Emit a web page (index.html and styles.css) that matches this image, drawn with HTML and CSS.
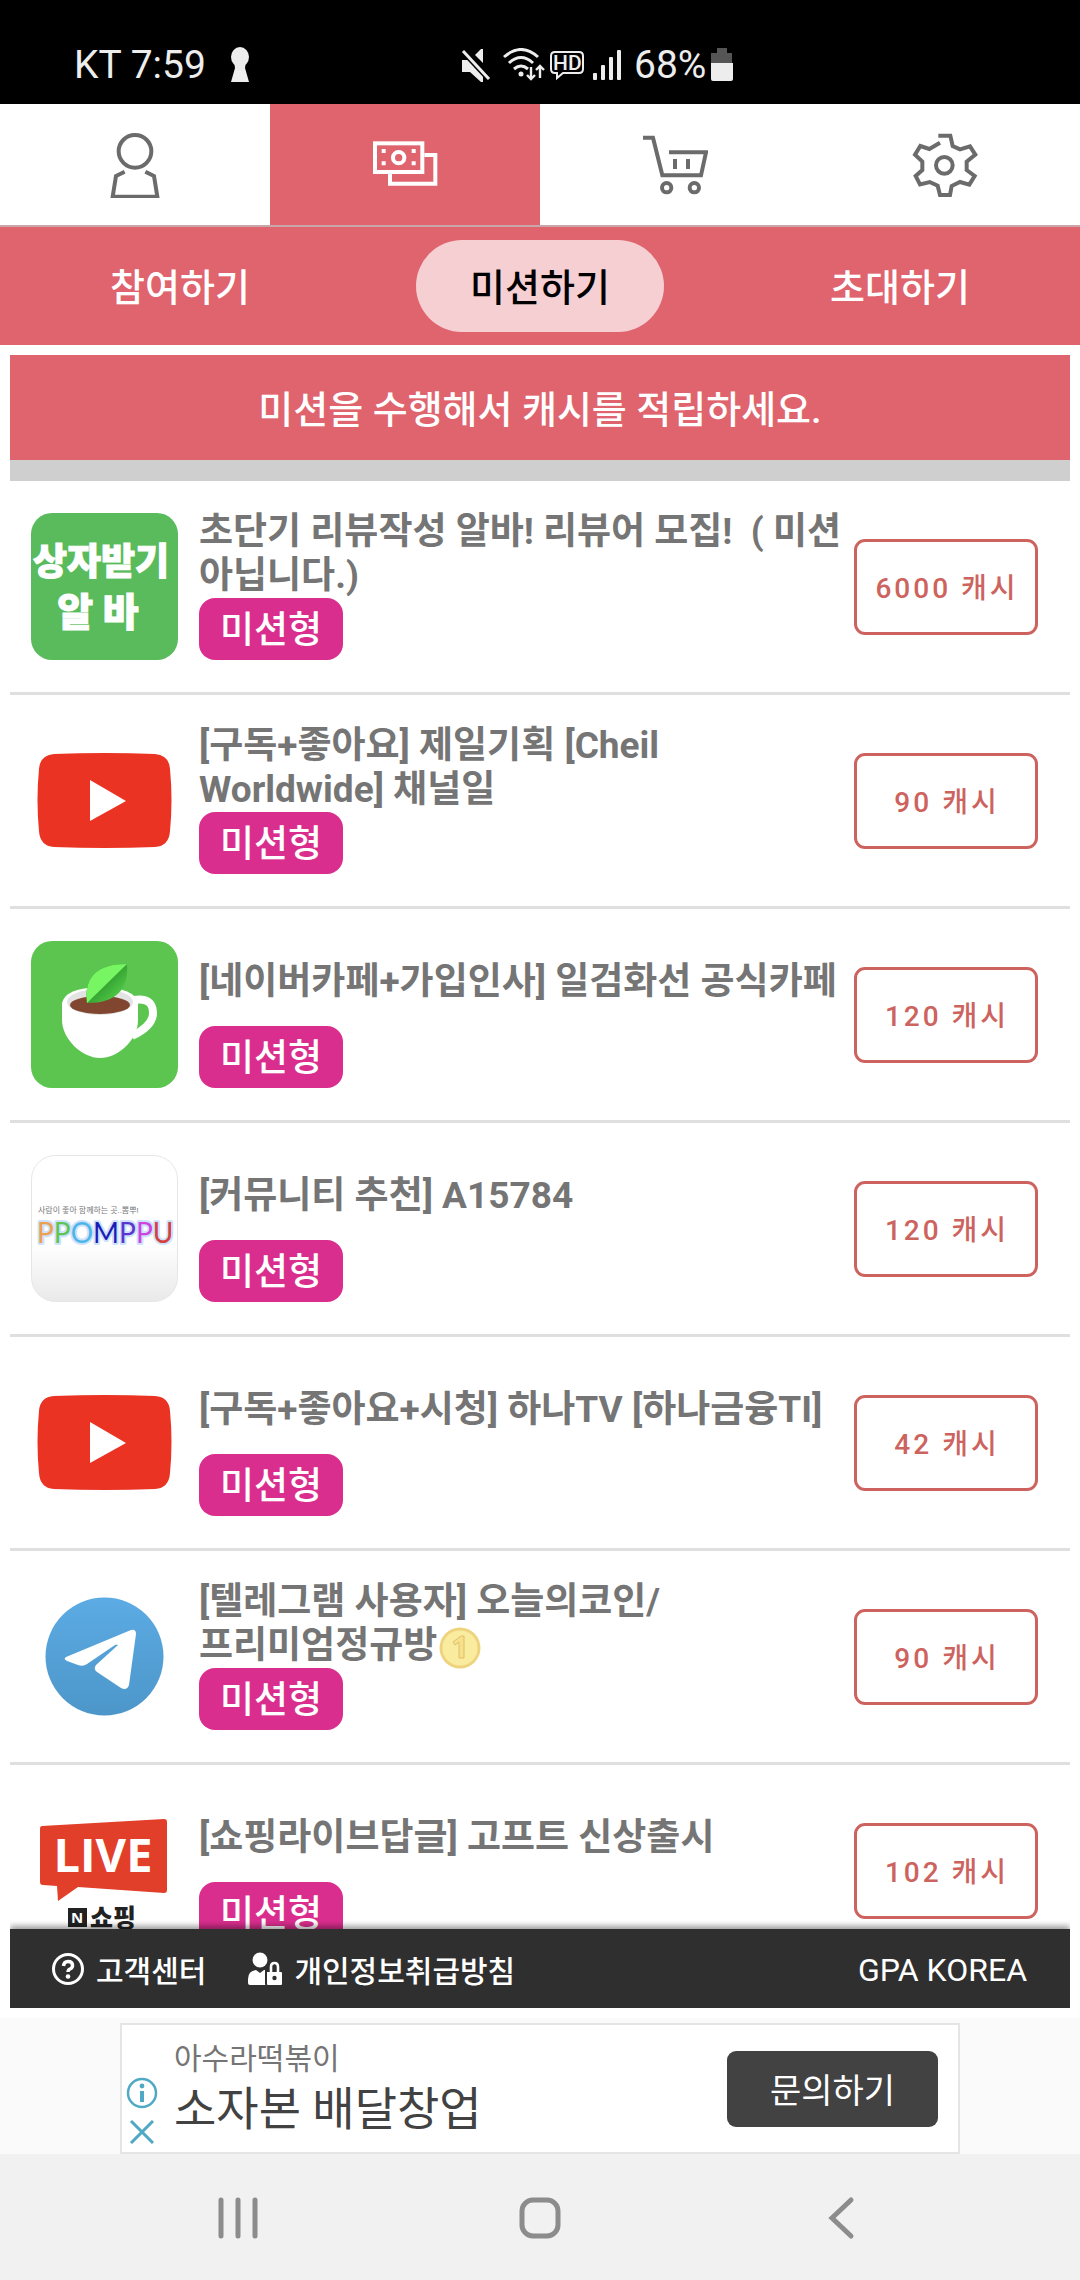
FILE: index.html
```html
<!DOCTYPE html>
<html lang="ko">
<head>
<meta charset="utf-8">
<meta name="viewport" content="width=device-width, initial-scale=1">
<title>미션하기</title>
<link rel="stylesheet" href="styles.css">
</head>
<body>
<div class="status">
  <div class="status-left">
    <span>KT 7:59</span>
    <svg width="20" height="36" viewBox="0 0 20 36" fill="#ededed"><ellipse cx="10" cy="10" rx="9" ry="10"/><path d="M4 14h12l-1 7 4 14H1l4-14z"/></svg>
  </div>
  <div class="status-right">
    <svg width="30" height="34" viewBox="0 0 30 34"><path d="M1 12h6L22 27v7h-2L9 24H1z" fill="#ededed"/><path d="M22 1v14l-8-8 6-6z" fill="#ededed"/><path d="M2 3l26 28" stroke="#000" stroke-width="6"/><path d="M2 3l26 28" stroke="#ededed" stroke-width="3"/></svg>
    <svg class="wifi" width="42" height="34" viewBox="0 0 42 34" fill="none" stroke="#ededed" stroke-width="3"><path d="M1 9q17-15 34 0M6 15q12-11 24 0M11 21q7-6 14 0"/><circle cx="18" cy="26" r="2.5" fill="#ededed" stroke="none"/><path d="M28 19v12M24 27l4 4 4-4M37 30V18M33 22l4-4 4 4" stroke-width="2.4"/></svg>
    <svg width="36" height="32" viewBox="0 0 36 32" fill="none" stroke="#ededed"><path d="M6 3h24q4 0 4 4v13q0 4-4 4H14l-6 5v-5H6q-4 0-4-4V7q0-4 4-4z" stroke-width="2"/><text x="4" y="21" font-size="21" class="hd">HD</text></svg>
    <svg class="signal" width="28" height="32" viewBox="0 0 28 32" fill="#ededed"><rect y="24" width="4" height="7" rx="1"/><rect x="8" y="16" width="4" height="15" rx="1"/><rect x="16" y="8" width="4" height="23" rx="1"/><rect x="24" y="1" width="4" height="30" rx="1"/></svg>
    <span>68%</span>
    <svg class="battery" width="22" height="34" viewBox="0 0 22 34"><path d="M6 0h10v5h5v12H0V5h6z" fill="#555"/><path d="M0 15h22v16q0 2-2 2H2q-2 0-2-2z" fill="#ededed"/></svg>
  </div>
</div>

<nav class="tabs" aria-label="주 메뉴">
  <a href="#me" aria-label="내 정보"><svg viewBox="36 36 198 198"><circle cx="135" cy="94" r="49"/><path d="M104 155l-26 13-10 62h134l-10-62-26-13"/></svg></a>
  <a href="#cash" class="on" aria-label="적립"><svg viewBox="36 36 198 198"><rect x="45" y="70" width="142" height="86"/><circle cx="116" cy="113" r="17"/><path d="M193 105h33v86H90v-32"/><path d="M65 93h12M155 93h12M65 130h12M155 130h12"/></svg></a>
  <a href="#shop" aria-label="상점"><svg viewBox="36 36 198 198"><path d="M39 53h30l28 113h116l15-69H117M135 117v30M174 117v30"/><circle cx="110" cy="203" r="14"/><circle cx="193" cy="203" r="14"/></svg></a>
  <a href="#settings" aria-label="설정"><svg viewBox="846 36 198 198"><path d="M925 47h36l7 31 22 10 30-9 16 25-26 21v25l24 18-16 26-28-8-25 12-5 27h-30l-7-28-24-11-29 7-13-25 20-18v-25l-22-21 16-26 27 9 32-19"/><circle cx="943" cy="136" r="25"/></svg></a>
</nav>

<nav class="subtabs" aria-label="적립 메뉴">
  <a href="#join">참여하기</a>
  <a href="#mission" class="on">미션하기</a>
  <a href="#invite">초대하기</a>
</nav>

<main class="content">
  <h1 class="banner">미션을 수행해서 캐시를 적립하세요.</h1>
  <ul class="missions">
    <li class="mission">
      <svg class="thumb" viewBox="0 0 147 147"><rect width="147" height="147" rx="21" fill="#5abb5c"/><g class="heavy"><text x="70" y="62" font-size="37">상자받기</text><text x="67" y="113" font-size="39">알 바</text></g></svg>
      <div class="info"><h2>초단기 리뷰작성 알바! 리뷰어 모집! &nbsp;( 미션 아닙니다.)</h2><span class="badge">미션형</span></div>
      <button class="price">6000 캐시</button>
    </li>
    <li class="mission">
      <svg class="thumb" viewBox="0 0 147 147"><path d="M23 27q51-2 101 0 14 1 15 15 3 31 0 62-1 15-15 16-50 2-101 0-14-1-15-16-3-31 0-62 1-14 15-15z" fill="#ea3323"/><path d="M59 53l36 21-36 20z" fill="#fff"/></svg>
      <div class="info"><h2>[구독+좋아요] 제일기획 [Cheil Worldwide] 채널일</h2><span class="badge">미션형</span></div>
      <button class="price">90 캐시</button>
    </li>
    <li class="mission">
      <svg class="thumb" viewBox="0 0 147 147">
        <defs><linearGradient id="leaf" x1="0" y1="0" x2="1" y2="1"><stop offset="0.4" stop-color="#2f9a2f"/><stop offset="1" stop-color="#5fe050"/></linearGradient></defs>
        <rect width="147" height="147" rx="21" fill="#5bc550"/>
        <path d="M103 59q19-3 19 13 0 13-21 23" fill="none" stroke="#fff" stroke-width="8"/>
        <path d="M31 62q3-15 38-16 35 1 38 16v17c0 20-20 38-38 38S31 98 31 79z" fill="#fff"/>
        <ellipse cx="69" cy="61" rx="33" ry="13" fill="#e3e3e3"/><ellipse cx="69" cy="64" rx="30" ry="9" fill="#81462f"/>
        <path d="M56 62Q51 23 96 23 99 62 56 62z" fill="url(#leaf)"/><path d="M56 62Q51 23 96 23z" fill="#78f562"/>
      </svg>
      <div class="info"><h2>[네이버카페+가입인사] 일검화선 공식카페</h2><span class="badge">미션형</span></div>
      <button class="price">120 캐시</button>
    </li>
    <li class="mission">
      <svg class="thumb" viewBox="0 0 147 147">
        <defs><linearGradient id="paper" x1="0" y1="0" x2="0" y2="1"><stop offset="0.6" stop-color="#fff"/><stop offset="1" stop-color="#e9e9e9"/></linearGradient></defs>
        <rect x="0.5" y="0.5" width="146" height="146" rx="24" fill="url(#paper)" stroke="#e6e6e6"/>
        <text x="7" y="58" font-size="8" class="tagline">사람이 좋아 함께하는 곳..뽐뿌!</text>
        <text x="6" y="88" font-size="28" class="ppomppu"><tspan fill="#eda04e">P</tspan><tspan fill="#5ec554">P</tspan><tspan fill="#4db6e8">O</tspan><tspan fill="#1c1cb8">M</tspan><tspan fill="#5b35cf">P</tspan><tspan fill="#cc44e0">P</tspan><tspan fill="#d34040">U</tspan></text>
      </svg>
      <div class="info"><h2>[커뮤니티 추천] A15784</h2><span class="badge">미션형</span></div>
      <button class="price">120 캐시</button>
    </li>
    <li class="mission">
      <svg class="thumb" viewBox="0 0 147 147"><path d="M23 27q51-2 101 0 14 1 15 15 3 31 0 62-1 15-15 16-50 2-101 0-14-1-15-16-3-31 0-62 1-14 15-15z" fill="#ea3323"/><path d="M59 53l36 21-36 20z" fill="#fff"/></svg>
      <div class="info"><h2>[구독+좋아요+시청] 하나TV [하나금융TI]</h2><span class="badge">미션형</span></div>
      <button class="price">42 캐시</button>
    </li>
    <li class="mission">
      <svg class="thumb" viewBox="0 0 147 147">
        <defs><linearGradient id="sky" x1="0" y1="0" x2="0" y2="1"><stop offset="0" stop-color="#5cabe4"/><stop offset="1" stop-color="#4c96c9"/></linearGradient></defs>
        <circle cx="73.500" cy="73.500" r="59" fill="url(#sky)"/>
        <path d="M35 74L100 47q5-1 5 4l-7 51q-2 6-8 3L66 89q-4-3-1-7l22-20q-1-1-3 0L56 81q-4 3-9 1l-11-4q-4-2-1-4z" fill="#fff"/>
      </svg>
      <div class="info"><h2>[텔레그램 사용자] 오늘의코인/<wbr>프리미엄정규방<svg class="coin" viewBox="0 0 42 42"><circle cx="21" cy="21" r="20.500" fill="#eed27c"/><circle cx="21" cy="21" r="18" fill="#f9ec9f" stroke="#f0d684"/><path d="M14 15l8-6h3v22h-5V15l-4 3z" fill="#f5e08c" stroke="#dfbf6a"/></svg></h2><span class="badge">미션형</span></div>
      <button class="price">90 캐시</button>
    </li>
    <li class="mission">
      <svg class="thumb" viewBox="0 0 147 147">
        <path d="M11 29l122-7q3 0 3 3v68q0 3-3 3l-86-6-20 14-1-15-14-1q-3 0-3-3V32q0-3 2-3z" fill="#e23f2a"/>
        <text x="72" y="75" font-size="47" class="live">LIVE</text>
        <rect x="37" y="111" width="19" height="19" fill="#222"/><text x="46" y="126" font-size="15" class="live">N</text>
        <text x="59" y="130" font-size="25" class="shopping">쇼핑</text>
      </svg>
      <div class="info"><h2>[쇼핑라이브답글] 고프트 신상출시</h2><span class="badge">미션형</span></div>
      <button class="price">102 캐시</button>
    </li>
  </ul>
  <footer class="footer">
    <a href="#help"><svg width="32" height="32" viewBox="0 0 32 32" fill="none" stroke="#fff"><circle cx="16" cy="16" r="14.500" stroke-width="3"/><path d="M11.500 13q.5-4.500 4.500-4.500 4.500 0 4.500 4 0 2.500-2.500 3.500-2 1-2 3" stroke-width="3.500"/><circle cx="16" cy="23.500" r="2.300" fill="#fff" stroke="none"/></svg>고객센터</a>
    <a href="#privacy"><svg width="34" height="34" viewBox="0 0 34 34" fill="#fff"><circle cx="12" cy="8" r="7.500"/><path d="M8 18l4 3 4-3h1v14q0 1 1 1H2q-2 0-2-2v-4q0-8 8-9z"/><path d="M19 20h14q1 0 1 1v11q0 1-1 1H20q-1 0-1-1z"/><path d="M23 20v-5q0-4 3.500-4t3.500 4v5" fill="none" stroke="#fff" stroke-width="2.600"/><circle cx="26.500" cy="26" r="2.200" fill="#2f2f2f"/></svg>개인정보취급방침</a>
    <span class="company">GPA KOREA</span>
  </footer>
</main>

<aside class="ad-area">
  <div class="ad">
    <div class="ad-marks">
      <svg width="32" height="32" viewBox="0 0 32 32" fill="none" stroke="#4fa9c4"><circle cx="16" cy="16" r="14" stroke-width="2.500"/><path d="M16 14v11" stroke-width="4"/><circle cx="16" cy="9" r="2.400" fill="#4fa9c4" stroke="none"/></svg>
      <svg width="32" height="24" viewBox="0 0 32 24" fill="none" stroke="#4fa9c4" stroke-width="3"><path d="M5 1l22 22M27 1L5 23"/></svg>
    </div>
    <div class="ad-text"><p class="ad-name">아수라떡볶이</p><p class="ad-title">소자본 배달창업</p></div>
    <button class="ad-button">문의하기</button>
  </div>
</aside>

<div class="system">
  <button aria-label="최근 앱"><svg viewBox="0 0 44 44"><path d="M5 4v36M22 4v36M39 4v36"/></svg></button>
  <button aria-label="홈"><svg viewBox="0 0 44 44"><rect x="4" y="4" width="36" height="36" rx="11"/></svg></button>
  <button aria-label="뒤로"><svg viewBox="0 0 44 44"><path d="M31 4L12 22l19 18"/></svg></button>
</div>
</body>
</html>
```

FILE: styles.css
```css
* { box-sizing: border-box; }

body {
  margin: 0;
  height: 100vh;
  display: flex;
  flex-direction: column;
  background: #fff;
  font-family: Roboto, "Noto Sans CJK KR", sans-serif;
}

a { color: inherit; text-decoration: none; }
h1, h2, p, ul { margin: 0; padding: 0; }
button { font-family: inherit; border: 0; padding: 0; }
svg { flex: none; display: block; }

.status {
  height: 104px;
  flex: none;
  display: grid;
  grid-template-columns: 461px 1fr;
  padding-top: 26px;
  background: #000;
  color: #ededed;
  font-size: 39px;
}
.status-left { display: flex; align-items: center; gap: 24px; padding-left: 74px; }
.status-right { display: flex; align-items: center; }
.wifi { margin-left: 12px; margin-right: 4px; }
.signal { margin-left: 8px; margin-right: 13px; }
.battery { margin-left: 5px; }
.hd { font-weight: 500; fill: #ededed; stroke: none; }

.tabs {
  flex: none;
  display: grid;
  grid-template-columns: repeat(4, 1fr);
  height: 123px;
  border-bottom: 2px solid #c9a6a9;
}
.tabs a { display: grid; place-items: center; }
.tabs svg { width: 66px; height: 66px; fill: none; stroke: #6b6b6b; stroke-width: 12; }
.tabs .on { background: #df646e; }
.tabs .on svg { stroke: #fff; }

.subtabs {
  flex: none;
  display: grid;
  grid-template-columns: repeat(3, 1fr);
  place-items: center;
  height: 118px;
  background: #df646e;
  color: #fff;
  font-size: 38px;
  font-weight: 500;
}
.subtabs a { padding: 5px 54px 1px; line-height: 86px; border-radius: 46px; }
.subtabs .on { background: #f5cfd2; color: #000; }

.content {
  flex: 1;
  min-height: 0;
  display: flex;
  flex-direction: column;
  margin: 10px;
}
.banner {
  flex: none;
  padding-top: 5px;
  border-bottom: 21px solid #cfcfcf;
  background: #df646e;
  color: #fff;
  font-size: 38px;
  font-weight: 500;
  line-height: 100px;
  text-align: center;
}
.missions {
  flex: 1;
  min-height: 0;
  overflow-y: auto;
  scrollbar-width: none;
  list-style: none;
}
.mission {
  display: flex;
  align-items: flex-end;
  padding: 29px 32px 32px 21px;
  border-bottom: 3px solid #dfdfdf;
}
.thumb { width: 147px; height: 147px; }
.info {
  flex: 1;
  display: flex;
  flex-direction: column;
  align-items: flex-start;
  padding: 0 12px 0 21px;
}
.info h2 {
  display: flow-root;
  align-content: center;
  min-height: 88px;
  color: #757575;
  font-size: 37px;
  font-weight: 700;
  line-height: 44px;
  word-break: keep-all;
}
.badge {
  padding: 4px 21px 0;
  border-radius: 16px;
  background: #da2e8e;
  color: #fff;
  font-size: 37px;
  font-weight: 500;
  line-height: 58px;
}
.price {
  width: 184px;
  height: 96px;
  margin-bottom: 25px;
  padding: 0 0 2px 2px;
  border: 3px solid #cd635e;
  border-radius: 11px;
  background: transparent;
  color: #cd635e;
  font-size: 28px;
  font-weight: 500;
  letter-spacing: 3px;
}
.coin { display: inline-block; width: 42px; height: 42px; margin: -2px 0 -2px 2px; vertical-align: -9px; }

.heavy { fill: #fff; stroke: #fff; stroke-width: 1; font-weight: 900; text-anchor: middle; }
.tagline { fill: #777; }
.ppomppu {
  font-family: Lato, sans-serif;
  font-weight: 400;
  stroke: #cfe2fb;
  stroke-width: 4;
  stroke-linejoin: round;
  paint-order: stroke;
}
.live { fill: #fff; font-family: "Open Sans", sans-serif; font-weight: 700; text-anchor: middle; }
.shopping { fill: #222; font-weight: 900; }

.footer {
  position: relative;
  flex: none;
  display: flex;
  align-items: center;
  gap: 42px;
  height: 79px;
  padding: 0 43px 0 42px;
  background: #2f2f2f;
  box-shadow: 0 -3px 6px rgba(0, 0, 0, 0.4);
  clip-path: inset(-10px 0 0 0);
  color: #fff;
  font-size: 30px;
}
.footer a { display: flex; align-items: center; gap: 12px; font-weight: 500; }
.company { margin-left: auto; padding-top: 2px; font-size: 32px; }

.ad-area { flex: none; padding: 5px 120px 0; background: #fafafa; }
.ad {
  display: flex;
  align-items: center;
  height: 131px;
  padding: 0 20px 0 4px;
  border: 2px solid #e4e6e6;
  background: #fff;
}
.ad-marks { align-self: flex-end; display: grid; gap: 11px; padding-bottom: 8px; }
.ad-text { flex: 1; padding-left: 16px; }
.ad-name { color: #757575; font-size: 30px; line-height: 40px; }
.ad-title { color: #424242; font-size: 46px; line-height: 60px; }
.ad-button {
  width: 211px;
  height: 76px;
  border-radius: 9px;
  background: #424242;
  color: #fff;
  font-size: 34px;
}

.system {
  flex: none;
  display: flex;
  justify-content: space-between;
  align-items: center;
  height: 126px;
  padding: 2px 216px 0;
  background: #f1f1f1;
}
.system button { background: none; }
.system svg { width: 44px; height: 44px; fill: none; stroke: #8c8c8c; stroke-width: 5; stroke-linecap: round; }
```
